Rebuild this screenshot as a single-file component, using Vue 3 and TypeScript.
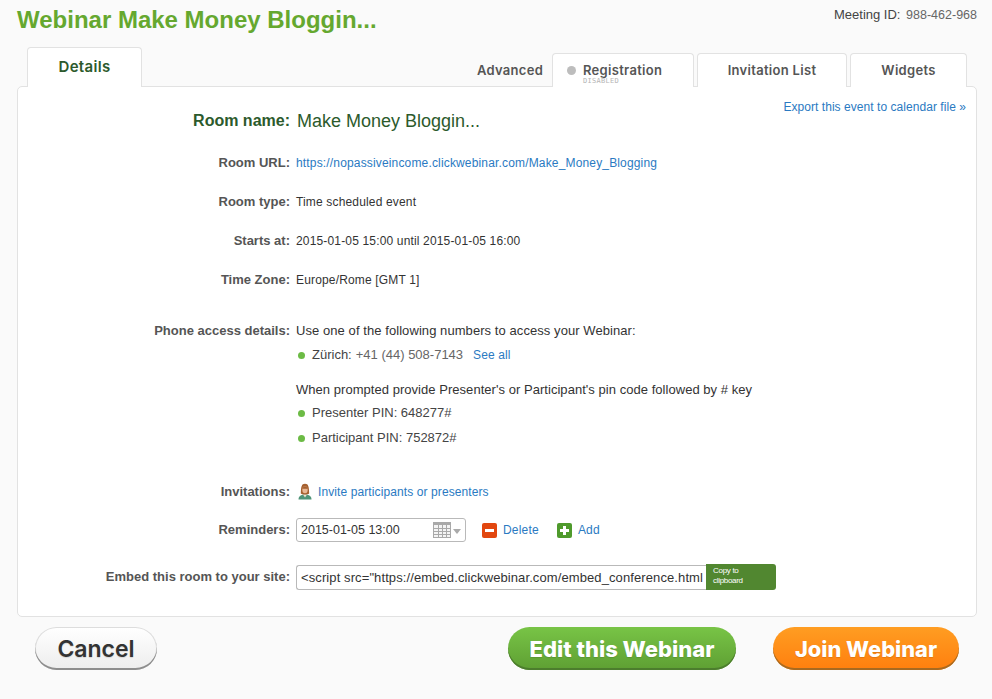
<template>
  <div class="page">
    <header class="top">
      <h1 class="title">Webinar Make Money Bloggin...</h1>
      <div class="meeting">Meeting ID: <span>988-462-968</span></div>
    </header>

    <nav class="tabs">
      <div class="tab active">Details</div>
      <div class="tab plain">Advanced</div>
      <div class="tab reg">
        <i class="grey-dot"></i>
        <span class="reg-text">Registration<small>DISABLED</small></span>
      </div>
      <div class="tab invite">Invitation List</div>
      <div class="tab widgets">Widgets</div>
    </nav>

    <section class="panel">
      <a class="export">Export this event to calendar file »</a>

      <div class="row room">
        <label>Room name:</label>
        <div class="value">Make Money Bloggin...</div>
      </div>
      <div v-for="r in infoRows" :key="r.label" class="row info">
        <label>{{ r.label }}</label>
        <div class="value">
          <a v-if="r.link">{{ r.value }}</a>
          <template v-else>{{ r.value }}</template>
        </div>
      </div>

      <div class="row phone">
        <label>Phone access details:</label>
        <div class="value">
          <p class="line first">Use one of the following numbers to access your Webinar:</p>
          <p class="line bullet"><i></i>Zürich: <span class="num">+41 (44) 508-7143</span><a class="see">See all</a></p>
          <p class="line prompt">When prompted provide Presenter's or Participant's pin code followed by # key</p>
          <p class="line bullet pin1"><i></i>Presenter PIN: 648277#</p>
          <p class="line bullet pin2"><i></i>Participant PIN: 752872#</p>
        </div>
      </div>

      <div class="row invitations">
        <label>Invitations:</label>
        <div class="value flexed">
          <svg class="agent" width="16" height="17" viewBox="0 0 16 17">
            <path d="M1.5 16.5c0-3.500 2.500-5 6.500-5s6.500 1.500 6.500 5z" fill="#4f9478" />
            <path d="M6 11.500h4l-2 3z" fill="#f0e2d2" />
            <path d="M3.800 10.500C4 4 4.500 .8 8 .8s4 3.200 4.200 9.700c-1 .8-2.300 1-4.200 1s-3.200-.2-4.200-1z" fill="#a5602f" />
            <ellipse cx="8" cy="6.800" rx="2.700" ry="3.500" fill="#e9b795" />
            <path d="M5.200 6c.5-2 1.800-2.800 2.800-2.800S10.400 4 10.800 6C9 5.800 7 5.400 5.200 6z" fill="#a5602f" />
          </svg>
          <a>Invite participants or presenters</a>
        </div>
      </div>

      <div class="row reminders">
        <label>Reminders:</label>
        <div class="value flexed">
          <div class="date">
            <span>2015-01-05 13:00</span>
            <svg class="cal" width="18" height="16" viewBox="0 0 18 16">
              <rect x="0" y="0" width="18" height="16" fill="#a9a9a9" />
              <path d="M1 3h16v12H1z" fill="#f4f4f4" />
              <path d="M5.500 3v12M9.500 3v12M13.500 3v12M1 6.500h16M1 9.500h16M1 12.500h16" stroke="#a9a9a9" fill="none" />
            </svg>
            <i class="caret"></i>
          </div>
          <span class="sq red"><b></b></span><a class="act del">Delete</a>
          <span class="sq green"><b></b><em></em></span><a class="act">Add</a>
        </div>
      </div>

      <div class="row embed">
        <label>Embed this room to your site:</label>
        <div class="value flexed">
          <div class="code">&lt;script src="https://embed.clickwebinar.com/embed_conference.html</div>
          <div class="copy">Copy to<br />clipboard</div>
        </div>
      </div>
    </section>

    <footer class="actions">
      <button class="btn cancel">Cancel</button>
      <button class="btn edit">Edit this Webinar</button>
      <button class="btn join">Join Webinar</button>
    </footer>
  </div>
</template>

<script setup lang="ts">
interface InfoRow {
  label: string;
  value: string;
  link?: boolean;
}

const infoRows: InfoRow[] = [
  { label: 'Room URL:', value: 'https://nopassiveincome.clickwebinar.com/Make_Money_Blogging', link: true },
  { label: 'Room type:', value: 'Time scheduled event' },
  { label: 'Starts at:', value: '2015-01-05 15:00 until 2015-01-05 16:00' },
  { label: 'Time Zone:', value: 'Europe/Rome [GMT 1]' }
];
</script>

<style>
html,
body {
  margin: 0;
  background: #fafafa;
}
</style>

<style scoped>
.page {
  width: 992px;
  height: 699px;
  overflow: hidden;
  box-sizing: border-box;
  padding: 0 15px 0 17px;
  font-family: 'Liberation Sans', Arial, sans-serif;
  font-size: 12px;
  color: #333;
}

.top {
  display: flex;
  justify-content: space-between;
  height: 47px;
}

.title {
  margin: 5px 0 0;
  font-size: 24px;
  line-height: 30px;
  font-weight: 700;
  color: #65a82f;
}

.meeting {
  margin-top: 7px;
  font-size: 13px;
  line-height: 16px;
  color: #444;
}

.meeting span {
  margin-left: 2px;
  font-size: 12.5px;
  color: #666;
}

.tabs {
  display: flex;
  align-items: flex-end;
  height: 40px;
  padding-left: 10px;
  margin-bottom: -1px;
  position: relative;
  z-index: 1;
  font-family: Inter, 'Open Sans', sans-serif;
  font-weight: 600;
  font-size: 13px;
  letter-spacing: 0.3px;
  color: #555;
}

.tab {
  box-sizing: border-box;
  height: 34px;
  border: 1px solid #e2e2e2;
  border-bottom: 0;
  border-radius: 4px 4px 0 0;
  background: #fff;
  text-align: center;
  line-height: 32px;
}

.tab.active {
  width: 115px;
  height: 40px;
  line-height: 38px;
  font-size: 15px;
  color: #2c5a2c;
  margin-right: 331px;
}

.tab.plain {
  width: 74px;
  margin-right: 5px;
  border-color: transparent;
  background: none;
}

.tab.reg {
  display: flex;
  width: 142px;
  padding-left: 14px;
  text-align: left;
}

.grey-dot {
  width: 9px;
  height: 9px;
  margin: 12px 7px 0 0;
  border-radius: 50%;
  background: #bdbdbd;
}

.reg-text {
  position: relative;
  height: 16px;
  margin-top: 8px;
  line-height: 16px;
}

.reg-text small {
  position: absolute;
  left: 0;
  top: 16px;
  font-family: 'DejaVu Sans Mono', monospace;
  font-size: 7px;
  font-weight: 400;
  line-height: 7px;
  letter-spacing: 0.3px;
  color: #b5b5b5;
}

.tab.invite {
  width: 150px;
  margin-left: 3px;
}

.tab.widgets {
  width: 117px;
  margin-left: 3px;
}

.panel {
  box-sizing: border-box;
  width: 960px;
  height: 531px;
  padding-top: 12px;
  border: 1px solid #e2e2e2;
  border-radius: 5px;
  background: #fff;
}

a {
  color: #2a7ac2;
}

.export {
  float: right;
  margin: 0 10px 0 0;
  line-height: 16px;
  letter-spacing: 0.05px;
}

.row {
  display: grid;
  grid-template-columns: 272px 1fr;
  column-gap: 6px;
  align-items: center;
  line-height: 16px;
}

.row label {
  text-align: right;
  font-size: 13px;
  font-weight: 700;
  color: #555;
}

.value {
  color: #333;
}

.flexed {
  display: flex;
  align-items: center;
}

.row.room {
  padding-top: 12px;
  line-height: 20px;
}

.row.room label {
  font-size: 16px;
  color: #2c5a2c;
}

.row.room .value {
  margin-left: 1px;
  font-size: 18px;
  color: #2c5a2c;
}

.row.info {
  margin-top: 23px;
}

.row.info .value {
  letter-spacing: 0.16px;
}

.row.room + .row.info {
  margin-top: 24px;
}

.row.phone {
  margin-top: 35px;
  align-items: start;
}

.row.phone .value {
  font-size: 13px;
}

.line {
  margin: 0;
  line-height: 16px;
}

.first {
  letter-spacing: 0.07px;
}

.bullet {
  display: flex;
  align-items: center;
  margin-top: 8px;
  color: #444;
}

.bullet i {
  width: 7px;
  height: 7px;
  margin: 0 7px 0 2px;
  border-radius: 50%;
  background: #6cbb45;
}

.num {
  margin-left: 4px;
  color: #666;
}

.see {
  margin-left: 10px;
  font-size: 12px;
  letter-spacing: 0.1px;
}

.prompt {
  margin-top: 19px;
  letter-spacing: 0.04px;
}

.pin1 {
  margin-top: 7px;
}

.pin2 {
  margin-top: 9px;
}

.row.invitations {
  margin-top: 37px;
}

.row.invitations a {
  letter-spacing: 0.1px;
}

.agent {
  margin: 0 5px 0 1px;
}

.row.reminders {
  margin-top: 18px;
}

.date {
  display: flex;
  align-items: center;
  box-sizing: border-box;
  width: 170px;
  height: 24px;
  padding: 0 4px;
  border: 1px solid #b9b9b9;
  border-radius: 3px;
  font-size: 12.5px;
  color: #333;
}

.cal {
  margin-left: 33px;
}

.caret {
  margin: 2px 0 0 2px;
  border: 4px solid transparent;
  border-top: 5px solid #aaa;
  border-bottom: 0;
}

.sq {
  position: relative;
  width: 15px;
  height: 15px;
  border-radius: 2px;
}

.sq.red {
  margin-left: 16px;
  background: #e2470f;
}

.sq.green {
  margin-left: 18px;
  background: #4f9a2c;
}

.sq b {
  position: absolute;
  left: 3px;
  top: 6px;
  width: 9px;
  height: 3px;
  background: #fff;
}

.sq em {
  position: absolute;
  left: 6px;
  top: 3px;
  width: 3px;
  height: 9px;
  background: #fff;
}

.act {
  margin-left: 6px;
  letter-spacing: 0.2px;
}

.row.embed {
  margin-top: 22px;
}

.code {
  box-sizing: border-box;
  width: 410px;
  height: 25px;
  padding: 0 4px;
  overflow: hidden;
  white-space: nowrap;
  font-size: 13px;
  letter-spacing: 0.1px;
  line-height: 23px;
  border: 1px solid #b9b9b9;
  border-right: 0;
  border-radius: 3px 0 0 3px;
}

.copy {
  box-sizing: border-box;
  width: 70px;
  height: 26px;
  padding: 2px 0 0 7px;
  border-radius: 0 3px 3px 0;
  background: #518730;
  color: #fff;
  font-size: 8px;
  letter-spacing: -0.3px;
  line-height: 10px;
}

.actions {
  display: flex;
  align-items: flex-start;
  padding: 10px 18px 0;
}

.btn {
  height: 43px;
  padding: 0;
  border: 0;
  border-radius: 22px;
  font-family: Inter, 'Open Sans', sans-serif;
  font-size: 22px;
  font-weight: 800;
  color: #fff;
  text-shadow: 0 1px 1px rgba(0, 0, 0, 0.12);
}

.cancel {
  width: 122px;
  background: linear-gradient(#fff, #ededed);
  box-shadow: inset 0 -2px 0 #8e8e8e, inset 0 0 0 1px #ddd;
  color: #333;
  font-size: 23px;
  font-weight: 600;
}

.edit {
  width: 228px;
  margin-left: auto;
  background: linear-gradient(#78c446, #5e9f33);
  box-shadow: inset 0 -2px 0 #4c7d2d;
}

.join {
  width: 186px;
  margin-left: 37px;
  font-size: 21.8px;
  background: linear-gradient(#ff9d22, #ff7f0e);
  box-shadow: inset 0 -2px 0 #a86a20;
}
</style>
